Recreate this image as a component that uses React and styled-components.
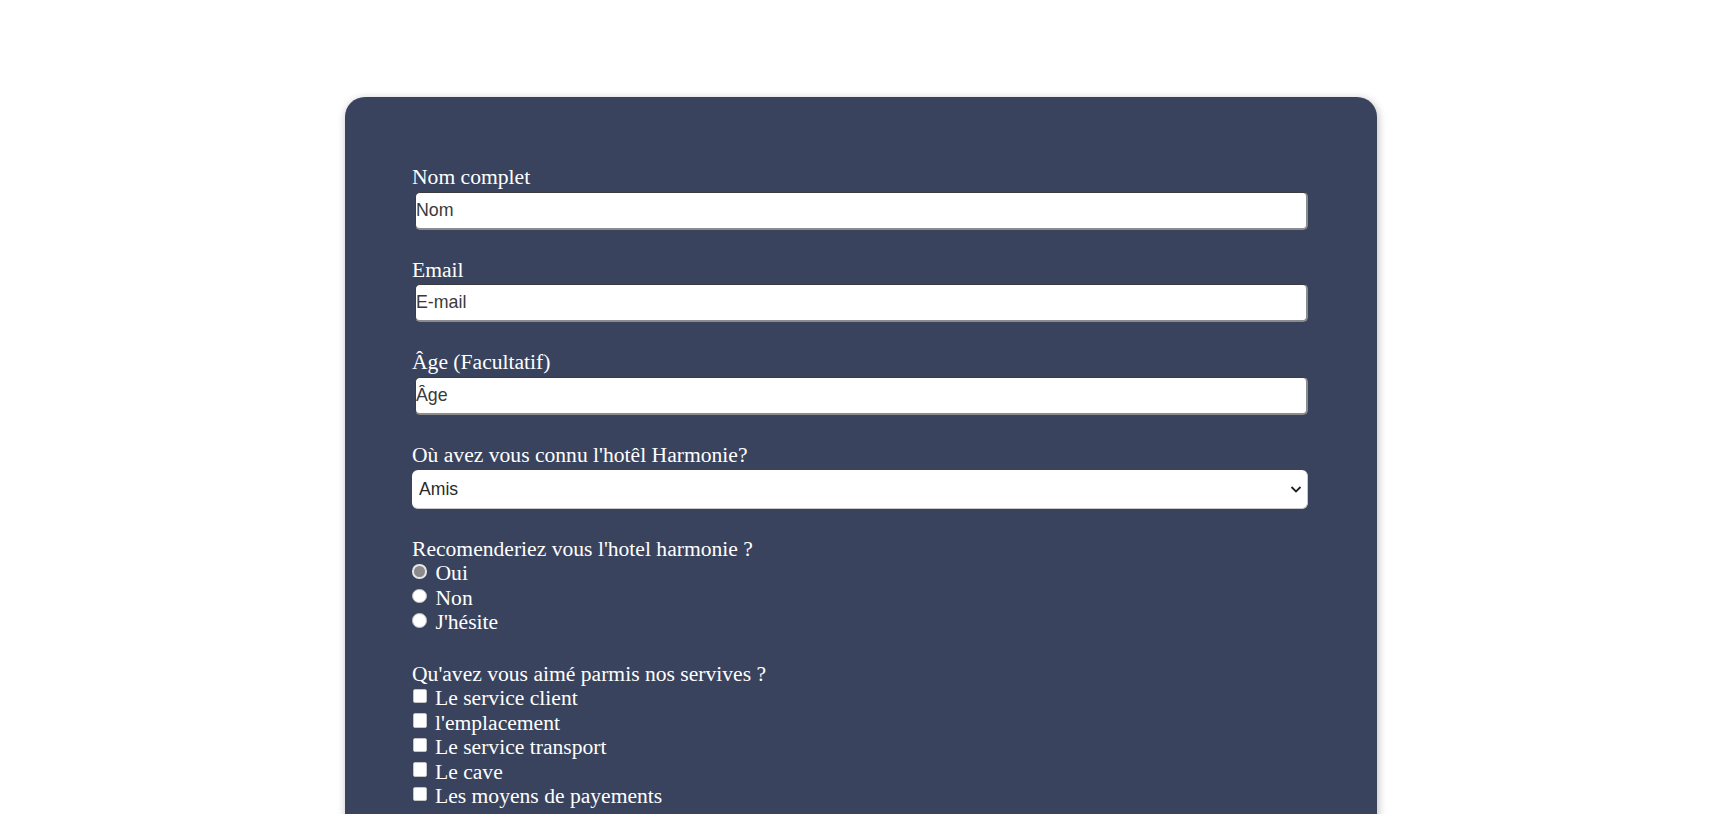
import React from "react";
import styled, { createGlobalStyle } from "styled-components";

const Global = createGlobalStyle`
  html, body { margin: 0; padding: 0; background: #ffffff; }
  body { font-family: "Liberation Serif", "Times New Roman", serif; }
`;

const Page = styled.div`
  padding-top: 97px;
  display: flex;
  justify-content: center;
`;

const Card = styled.form`
  width: 1032px;
  box-sizing: border-box;
  background: #39435d;
  border-radius: 20px;
  box-shadow: 1px 2px 8px rgba(0, 0, 0, 0.28);
  padding: 68px 69px 80px 67px;
  display: flex;
  flex-direction: column;
`;

const Group = styled.div`
  display: flex;
  flex-direction: column;
  margin-bottom: ${(p) => (p.$after != null ? p.$after : 28.2)}px;
`;

const Label = styled.label`
  display: block;
  color: #ffffff;
  font-family: "Liberation Serif", "Times New Roman", serif;
  font-size: 21.6px;
  line-height: 24.5px;
  margin-bottom: ${(p) => p.$gap || 0}px;
`;

const TextInput = styled.input`
  box-sizing: border-box;
  height: 38px;
  width: 893px;
  margin: 0 0 0 3px;
  padding: 0;
  background: #ffffff;
  border-style: solid;
  border-width: 1px 2px 2px 1px;
  border-color: #3c3c3c #8c8c8c #8c8c8c #3c3c3c;
  border-radius: 5px;
  font-family: "Liberation Sans", Arial, sans-serif;
  font-size: 17.8px;
  color: #222;
  outline: none;
  &::placeholder { color: #3a3a3a; opacity: 1; }
`;

const SelectWrap = styled.div`
  position: relative;
  width: 896px;
`;

const Select = styled.select`
  appearance: none;
  -webkit-appearance: none;
  box-sizing: border-box;
  width: 100%;
  height: 39.5px;
  border: none;
  border-right: 1px solid #c8c8c8;
  border-bottom: 1px solid #c8c8c8;
  border-radius: 6px;
  background: #ffffff;
  padding: 0 0 0 7px;
  font-family: "Liberation Sans", Arial, sans-serif;
  font-size: 17.6px;
  color: #2a2a2a;
  outline: none;
`;

const Chevron = styled.svg`
  position: absolute;
  right: 6px;
  top: 14px;
  width: 12px;
  height: 10px;
  pointer-events: none;
`;

const OptionRow = styled.label`
  display: flex;
  align-items: flex-start;
  gap: ${(p) => (p.$radio ? 9 : 8)}px;
  color: #ffffff;
  font-family: "Liberation Serif", "Times New Roman", serif;
  font-size: 21.6px;
  line-height: 24.5px;
`;

const Radio = styled.input.attrs({ type: "radio" })`
  appearance: none;
  -webkit-appearance: none;
  box-sizing: border-box;
  width: 14.5px;
  height: 14.5px;
  margin: 3px 0 0 0;
  border-radius: 50%;
  background: #ffffff;
  border: 1px solid #b9b9b9;
  flex-shrink: 0;
  &:checked {
    background: #8a8a8a;
    border: 2.5px solid #e6e6e6;
  }
`;

const Checkbox = styled.input.attrs({ type: "checkbox" })`
  appearance: none;
  -webkit-appearance: none;
  box-sizing: border-box;
  width: 14.5px;
  height: 14.5px;
  margin: 2.5px 0 0 0.5px;
  border-radius: 2px;
  background: #ffffff;
  border: 1px solid #c4c4c4;
  flex-shrink: 0;
`;

const fields = [
  { label: "Nom complet", ph: "Nom", type: "text" },
  { label: "Email", ph: "E-mail", type: "email" },
  { label: "Âge (Facultatif)", ph: "Âge", type: "number" },
];

const radios = ["Oui", "Non", "J'hésite"];
const checks = [
  "Le service client",
  "l'emplacement",
  "Le service transport",
  "Le cave",
  "Les moyens de payements",
];

export default function App() {
  return (
    <>
      <Global />
      <Page>
        <Card onSubmit={(e) => e.preventDefault()}>
          {fields.map((f) => (
            <Group key={f.label}>
              <Label $gap={2}>{f.label}</Label>
              <TextInput type={f.type} placeholder={f.ph} />
            </Group>
          ))}
          <Group $after={27.8}>
            <Label $gap={2}>Où avez vous connu l'hotêl Harmonie?</Label>
            <SelectWrap>
              <Select defaultValue="amis">
                <option value="amis">Amis</option>
                <option value="reseaux">Réseaux sociaux</option>
                <option value="pub">Publicité</option>
                <option value="autre">Autre</option>
              </Select>
              <Chevron viewBox="0 0 12 10">
                <path d="M1.5 3 L6 7.5 L10.5 3" fill="none" stroke="#222" strokeWidth="1.8" />
              </Chevron>
            </SelectWrap>
          </Group>
          <Group $after={27}>
            <Label>Recomenderiez vous l'hotel harmonie ?</Label>
            {radios.map((r, i) => (
              <OptionRow key={r} $radio>
                <Radio name="reco" defaultChecked={i === 0} />
                {r}
              </OptionRow>
            ))}
          </Group>
          <Group $after={0}>
            <Label>Qu'avez vous aimé parmis nos servives ?</Label>
            {checks.map((c) => (
              <OptionRow key={c}>
                <Checkbox />
                {c}
              </OptionRow>
            ))}
          </Group>
        </Card>
      </Page>
    </>
  );
}
